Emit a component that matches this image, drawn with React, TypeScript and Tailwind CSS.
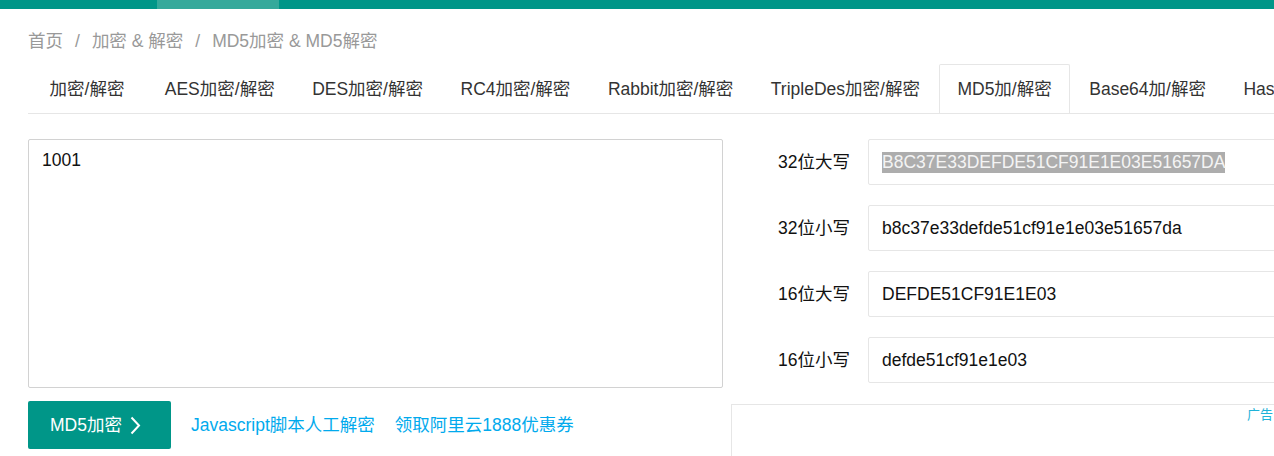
import React from 'react';

// escaped to keep the CJK text intact
const JM = '\u52a0\u5bc6/\u89e3\u5bc6';
const tabs = [
  JM,
  'AES' + JM,
  'DES' + JM,
  'RC4' + JM,
  'Rabbit' + JM,
  'TripleDes' + JM,
  'MD5\u52a0/\u89e3\u5bc6',
  'Base64\u52a0/\u89e3\u5bc6',
  'Hash\u52a0/\u89e3\u5bc6',
];
const ACTIVE = 'MD5\u52a0/\u89e3\u5bc6';

const results = [
  { label: '32\u4f4d\u5927\u5199', value: 'B8C37E33DEFDE51CF91E1E03E51657DA', selected: true },
  { label: '32\u4f4d\u5c0f\u5199', value: 'b8c37e33defde51cf91e1e03e51657da' },
  { label: '16\u4f4d\u5927\u5199', value: 'DEFDE51CF91E1E03' },
  { label: '16\u4f4d\u5c0f\u5199', value: 'defde51cf91e1e03' },
];

export default function App() {
  return (
    <div className="w-[1274px] h-[456px] overflow-hidden bg-white text-[17.5px] text-[#333] font-['Liberation_Sans','Noto_Sans_CJK_SC',sans-serif]">
      {/* top nav strip */}
      <div className="h-[9px] bg-[#009688] flex">
        <div className="ml-[157px] w-[122px] bg-[#35a99b]" />
      </div>

      <div className="pl-[28px]">
        {/* breadcrumb */}
        <div className="mt-[20px] h-[24px] leading-[24px] text-[#999] whitespace-nowrap">
          <span>{'\u9996\u9875'}</span>
          <span className="mx-[12px]">/</span>
          <span>{'\u52a0\u5bc6 & \u89e3\u5bc6'}</span>
          <span className="mx-[12px]">/</span>
          <span>{'MD5\u52a0\u5bc6 & MD5\u89e3\u5bc6'}</span>
        </div>

        {/* tabs */}
        <ul className="mt-[11px] flex h-[50px] border-b border-[#e6e6e6] whitespace-nowrap overflow-hidden">
          {tabs.map((t) => (
            <li
              key={t}
              className="relative shrink-0 h-[49px] px-[18.75px] min-w-[118px] text-center leading-[51px] text-[#333]"
            >
              {t === ACTIVE && (
                <span className="absolute left-0 right-0 top-0 h-[50px] bg-white border border-b-0 border-[#e6e6e6] rounded-t-[2px]" />
              )}
              <span className="relative">{t}</span>
            </li>
          ))}
        </ul>

        {/* body */}
        <div className="mt-[25px] flex">
          <div className="w-[695px] shrink-0 flex flex-col">
            <div className="h-[249px] border border-[#d2d2d2] rounded-[2px] px-[13px] pt-[10px] leading-[20px] text-[#111]">
              1001
            </div>
            <div className="mt-[13px] flex items-center gap-[20px] whitespace-nowrap">
              <button className="h-[48px] w-[143px] bg-[#009688] rounded-[2px] text-white flex items-center pl-[22px] gap-[8px]">
                <span>{'MD5\u52a0\u5bc6'}</span>
                <svg width="11" height="19" viewBox="0 0 11 19" fill="none">
                  <path d="M1.5 1.5 L9 9.5 L1.5 17.5" stroke="white" strokeWidth="2" />
                </svg>
              </button>
              <a className="text-[#01aaed]">{'Javascript\u811a\u672c\u4eba\u5de5\u89e3\u5bc6'}</a>
              <a className="text-[#01aaed]">{'\u9886\u53d6\u963f\u91cc\u4e911888\u4f18\u60e0\u5238'}</a>
            </div>
          </div>

          <div className="ml-[8px] w-[560px] shrink-0 flex flex-col gap-[20px]">
            {results.map((r) => (
              <div key={r.label} className="flex h-[46px]">
                <label className="w-[137px] shrink-0 text-right pr-[18px] leading-[46px] text-[#111]">
                  {r.label}
                </label>
                <div className="flex-1 border border-[#e6e6e6] rounded-[2px] pl-[13px] flex items-center whitespace-nowrap text-[#111]">
                  {r.selected ? (
                    <span className="bg-[#adadad] text-[#f4f4f4] leading-[21px]">{r.value}</span>
                  ) : (
                    <span className="leading-[21px]">{r.value}</span>
                  )}
                </div>
              </div>
            ))}
            <div className="relative mt-[1px] h-[80px] border border-[#e6e6e6]">
              <span className="absolute left-[515px] top-[1px] text-[13px] leading-[18px] text-[#1fb2d8]">{'\u5e7f\u544a'}</span>
            </div>
          </div>
        </div>
      </div>
    </div>
  );
}
